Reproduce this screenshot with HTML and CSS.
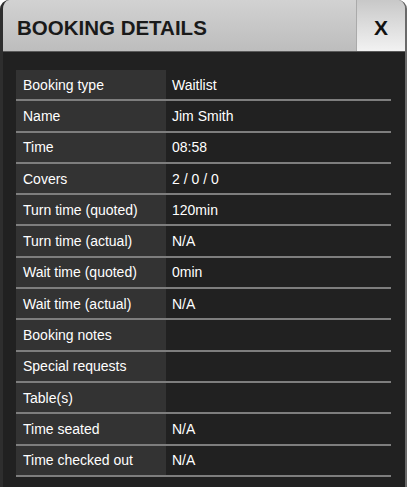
FILE: index.html
```html
<!DOCTYPE html>
<html>
<head>
<meta charset="utf-8">
<link rel="stylesheet" href="styles.css">
</head>
<body>
<div class="window">
  <div class="header">
    <div class="title">BOOKING DETAILS</div>
    <div class="close">X</div>
  </div>
  <div class="body">
    <table class="details">
      <tr><td class="label">Booking type</td><td class="value">Waitlist</td></tr>
      <tr><td class="label">Name</td><td class="value">Jim Smith</td></tr>
      <tr><td class="label">Time</td><td class="value">08:58</td></tr>
      <tr><td class="label">Covers</td><td class="value">2 / 0 / 0</td></tr>
      <tr><td class="label">Turn time (quoted)</td><td class="value">120min</td></tr>
      <tr><td class="label">Turn time (actual)</td><td class="value">N/A</td></tr>
      <tr><td class="label">Wait time (quoted)</td><td class="value">0min</td></tr>
      <tr><td class="label">Wait time (actual)</td><td class="value">N/A</td></tr>
      <tr><td class="label">Booking notes</td><td class="value"></td></tr>
      <tr><td class="label">Special requests</td><td class="value"></td></tr>
      <tr><td class="label">Table(s)</td><td class="value"></td></tr>
      <tr><td class="label">Time seated</td><td class="value">N/A</td></tr>
      <tr><td class="label">Time checked out</td><td class="value">N/A</td></tr>
    </table>
  </div>
</div>
</body>
</html>
```

FILE: styles.css
```css
html, body {
  margin: 0;
  padding: 0;
  background: #ffffff;
}
body {
  font-family: "Liberation Sans", Arial, sans-serif;
}
.window {
  width: 402px;
  height: 487px;
  background: #212121;
  border-left: 3px solid #2e2e2e;
  border-right: 2px solid #6a6a6a;
  border-radius: 9px 9px 0 0;
  overflow: hidden;
  box-sizing: content-box;
  position: relative;
}
.window::before {
  content: "";
  position: absolute;
  left: -2px;
  top: 110px;
  width: 1px;
  height: 40px;
  background: #1d6a2a;
}
.header {
  display: flex;
  height: 51px;
  background: linear-gradient(#d2d2d2, #bdbdbd);
  border-bottom: 1px solid #5a5a5a;
}
.title {
  flex: 1;
  padding-left: 14px;
  font-size: 20.5px;
  font-weight: bold;
  color: #1a1a1a;
  line-height: 55px;
  height: 51px;
}
.close {
  width: 48px;
  border-left: 1px solid #aaaaaa;
  background: linear-gradient(#c8c8c8, #f2f2f2);
  font-size: 21px;
  font-weight: bold;
  color: #111;
  text-align: center;
  line-height: 55px;
  height: 51px;
}
.body {
  padding: 18px 0 0 13px;
}
.details {
  width: 375px;
  border-collapse: collapse;
  font-size: 14px;
  color: #ffffff;
}
.details td {
  height: 29.3px;
  padding: 0;
  border-bottom: 2px solid #7e7e7e;
  vertical-align: middle;
}
.details .label {
  width: 143px;
  padding-left: 7px;
  background: #333333;
}
.details .value {
  padding-left: 6px;
  background: #212121;
}
```
